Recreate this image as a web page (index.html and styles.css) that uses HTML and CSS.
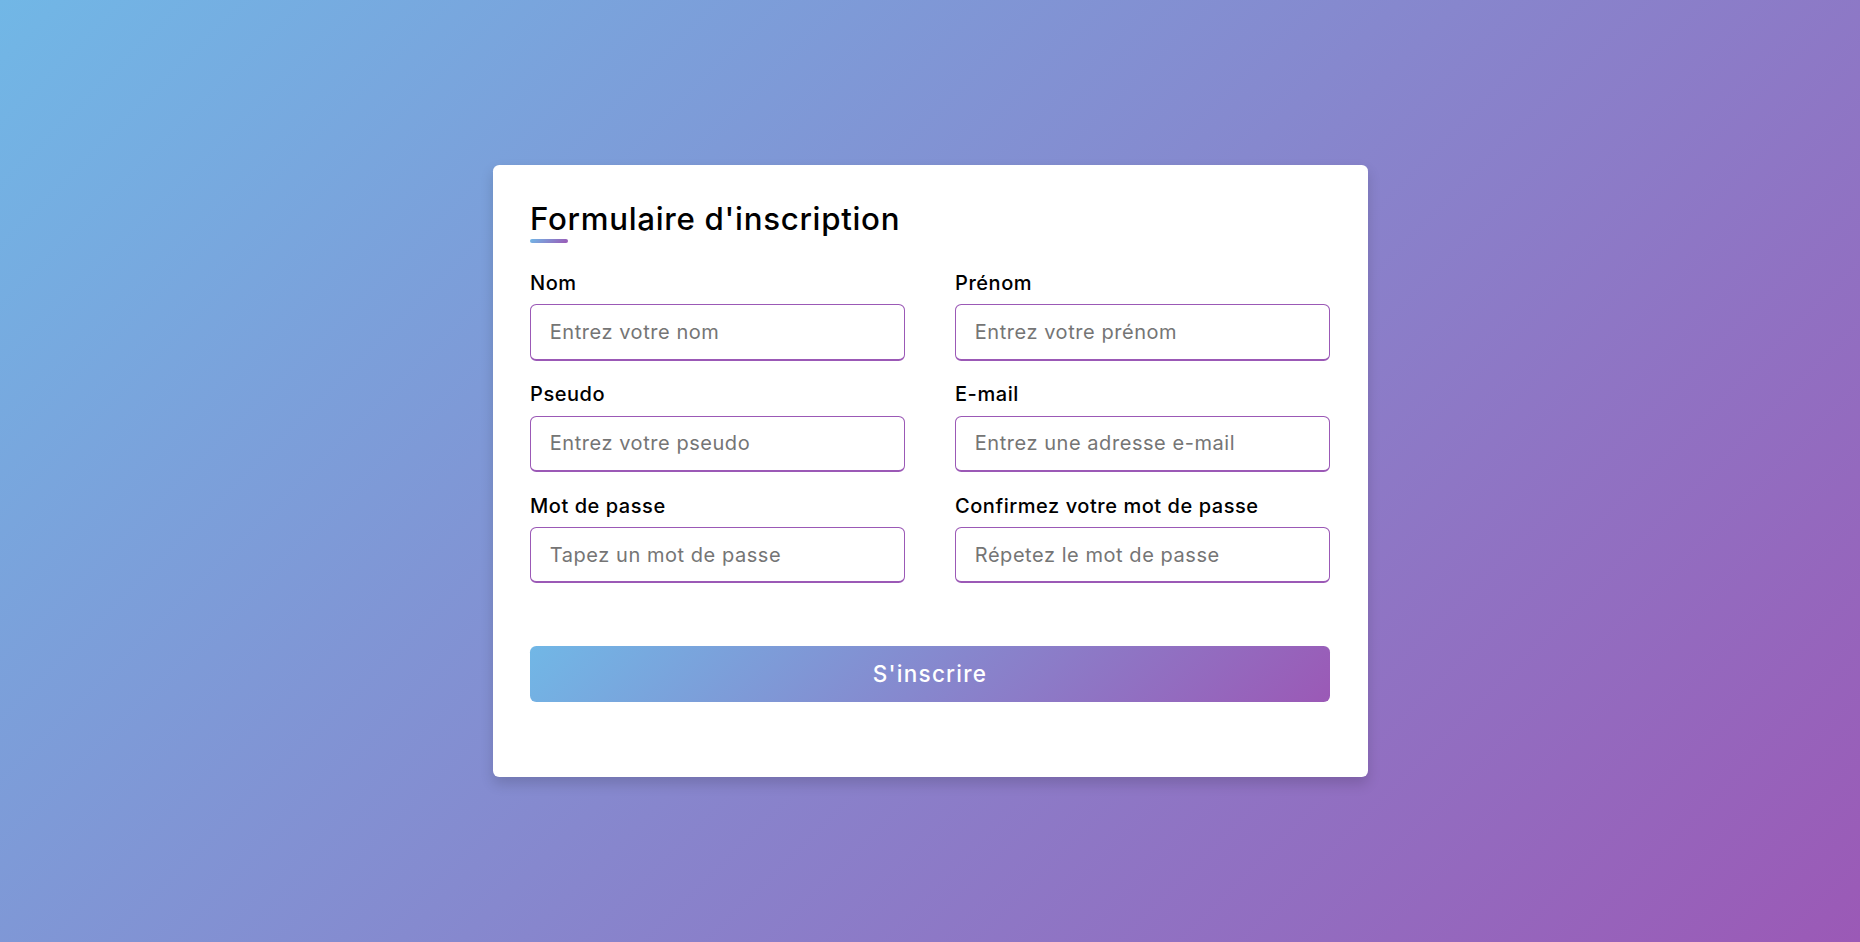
FILE: index.html
```html
<!DOCTYPE html>
<html lang="fr">
<head>
<meta charset="utf-8">
<title>Formulaire d'inscription</title>
<link rel="stylesheet" href="styles.css">
</head>
<body>
<div class="container">
  <div class="title">Formulaire d'inscription</div>
  <form class="content" action="#">
    <div class="user-details">
      <div class="input-box">
        <span class="details">Nom</span>
        <input type="text" placeholder="Entrez votre nom">
      </div>
      <div class="input-box">
        <span class="details">Prénom</span>
        <input type="text" placeholder="Entrez votre prénom">
      </div>
      <div class="input-box">
        <span class="details">Pseudo</span>
        <input type="text" placeholder="Entrez votre pseudo">
      </div>
      <div class="input-box">
        <span class="details">E-mail</span>
        <input type="text" placeholder="Entrez une adresse e-mail">
      </div>
      <div class="input-box">
        <span class="details">Mot de passe</span>
        <input type="text" placeholder="Tapez un mot de passe">
      </div>
      <div class="input-box">
        <span class="details">Confirmez votre mot de passe</span>
        <input type="text" placeholder="Répetez le mot de passe">
      </div>
    </div>
    <div class="button">
      <input type="submit" value="S'inscrire">
    </div>
  </form>
</div>
</body>
</html>
```

FILE: styles.css
```css
* {
  margin: 0;
  padding: 0;
  box-sizing: border-box;
  font-family: "Inter", "Open Sans", sans-serif;
}

html, body {
  height: 100%;
}

body {
  display: flex;
  justify-content: center;
  align-items: center;
  padding: 12.5px;
  background: linear-gradient(135deg, #71b7e6, #9b59b6);
}

.container {
  width: 875px;
  background-color: #fff;
  padding: 31.25px 37.5px;
  border-radius: 6.25px;
  box-shadow: 0 6.25px 12.5px rgba(0, 0, 0, 0.15);
}

.title {
  font-size: 31.25px;
  line-height: 1.5;
  font-weight: 500;
  letter-spacing: 0.7px;
  color: #000;
  position: relative;
}

.title::before {
  content: "";
  position: absolute;
  left: 0;
  bottom: 0;
  height: 3.75px;
  width: 37.5px;
  border-radius: 6.25px;
  background: linear-gradient(135deg, #71b7e6, #9b59b6);
}

.user-details {
  display: flex;
  flex-wrap: wrap;
  justify-content: space-between;
  margin: 25px 0 15px 0;
}

.input-box {
  margin-bottom: 18.75px;
  width: calc(100% / 2 - 25px);
}

.details {
  display: block;
  font-size: 20px;
  line-height: 30px;
  font-weight: 500;
  letter-spacing: 0.55px;
  color: #000;
  margin-bottom: 6.25px;
}

.input-box input {
  display: block;
  height: 56.25px;
  width: 100%;
  outline: none;
  font-size: 20px;
  letter-spacing: 0.55px;
  border-radius: 6.25px;
  padding-left: 18.75px;
  border: 1.25px solid #9b59b6;
  border-bottom-width: 2.5px;
  background: #fff;
}

.input-box input::placeholder {
  color: #757575;
}

.button {
  height: 56.25px;
  margin: 43.75px 0;
}

.button input {
  display: block;
  height: 100%;
  width: 100%;
  border-radius: 6.25px;
  border: none;
  color: #fff;
  font-size: 22.5px;
  font-weight: 500;
  letter-spacing: 1.25px;
  cursor: pointer;
  background: linear-gradient(135deg, #71b7e6, #9b59b6);
}
```
